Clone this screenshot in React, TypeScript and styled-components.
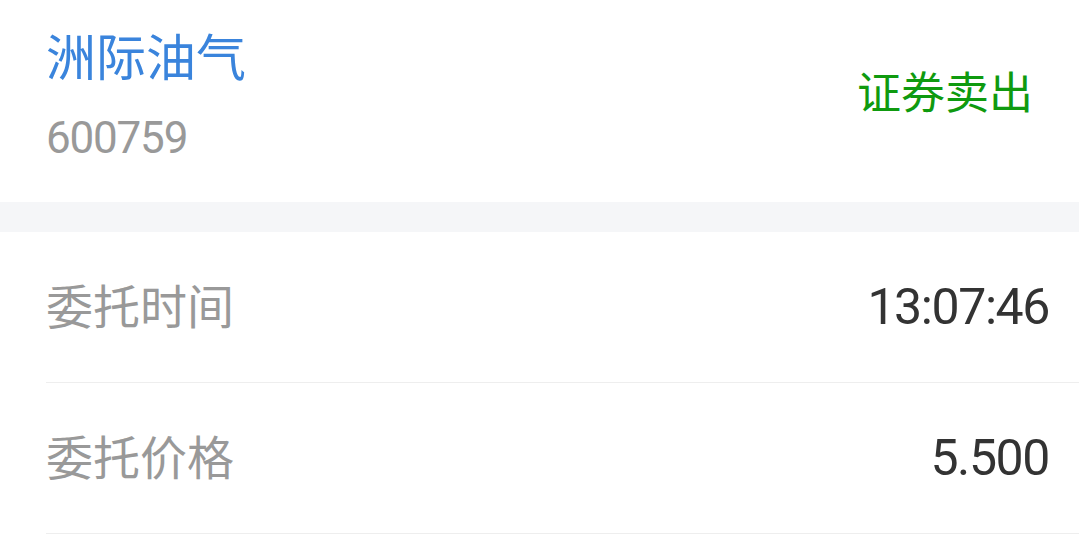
import React from "react";
import styled, { createGlobalStyle } from "styled-components";

const GlobalStyle = createGlobalStyle`
  html, body {
    margin: 0;
    padding: 0;
    background: #ffffff;
  }
  body {
    font-family: Roboto, "Noto Sans CJK SC", sans-serif;
  }
`;

const Page = styled.div`
  width: 1079px;
  background: #ffffff;
`;

const Header = styled.header`
  height: 202px;
  box-sizing: border-box;
  padding: 24px 46px 0 46px;
  display: flex;
  justify-content: space-between;
  align-items: flex-start;
`;

const StockInfo = styled.div`
  display: flex;
  flex-direction: column;
`;

const StockName = styled.div`
  font-family: "Noto Sans CJK SC", sans-serif;
  font-size: 50px;
  line-height: 60px;
  color: #3a84dc;
`;

const StockCode = styled.div`
  margin-top: 26px;
  font-family: Roboto, sans-serif;
  font-size: 44px;
  line-height: 56px;
  letter-spacing: -1.2px;
  color: #999999;
`;

const Direction = styled.div`
  margin-top: 38px;
  font-family: "Noto Sans CJK SC", sans-serif;
  font-size: 44px;
  line-height: 56px;
  color: #0f9a0f;
`;

const Band = styled.div`
  height: 30px;
  background: #f5f6f8;
`;

const List = styled.div`
  padding-left: 46px;
`;

const Row = styled.div`
  height: 151px;
  box-sizing: border-box;
  padding-right: 30px;
  border-bottom: 1px solid #eeeeee;
  display: flex;
  align-items: center;
  justify-content: space-between;
`;

const Label = styled.span`
  margin-bottom: 7px;
  font-family: "Noto Sans CJK SC", sans-serif;
  font-size: 47px;
  color: #999999;
`;

const Value = styled.span`
  font-family: Roboto, sans-serif;
  font-size: 50px;
  letter-spacing: -1.4px;
  color: #333333;
`;

const rows = [
  { label: "委托时间", value: "13:07:46" },
  { label: "委托价格", value: "5.500" },
];

export default function App() {
  return (
    <Page>
      <GlobalStyle />
      <Header>
        <StockInfo>
          <StockName>洲际油气</StockName>
          <StockCode>600759</StockCode>
        </StockInfo>
        <Direction>证券卖出</Direction>
      </Header>
      <Band />
      <List>
        {rows.map((r) => (
          <Row key={r.label}>
            <Label>{r.label}</Label>
            <Value>{r.value}</Value>
          </Row>
        ))}
      </List>
    </Page>
  );
}
